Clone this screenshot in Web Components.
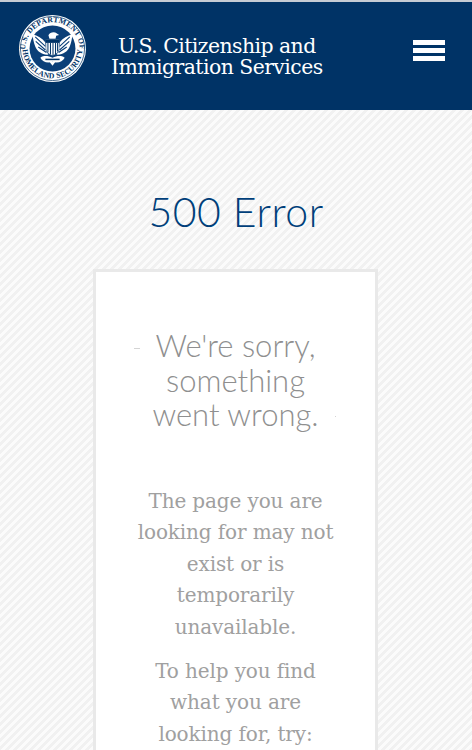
<!DOCTYPE html>
<html lang="en">
<head>
<meta charset="utf-8">
<title>500 Error</title>
<style>
  html, body { margin: 0; padding: 0; }
  body { width: 472px; height: 750px; overflow: hidden; font-family: "DejaVu Serif", serif; }
</style>
</head>
<body>
<uscis-header>
  <span>U.S. Citizenship and</span>
  <span>Immigration Services</span>
</uscis-header>
<error-page heading="500 Error">
  <span slot="lead">We're sorry,<br>something<br>went wrong.</span>
  <p>The page you are looking for may not exist or is temporarily unavailable.</p>
  <p>To help you find what you are looking for, try:</p>
</error-page>

<script>
class DhsSeal extends HTMLElement {
    constructor() {
        super();
        this._shadowRoot = this.attachShadow({mode: "open"})
    }

    connectedCallback() {
        this._shadowRoot.innerHTML = `
            <style>
                :host { display: block; width: 67px; height: 67px; flex: none; }
                svg { display: block; }
                text { font: 700 7.6px "Liberation Serif", serif; fill: #003366; letter-spacing: .2px; }
            </style>
            <svg width="67" height="67" viewBox="0 0 66 66">
                <circle cx="33" cy="33" r="33" fill="#fff"/>
                <circle cx="33" cy="33" r="31.6" fill="none" stroke="#003366" stroke-width=".7"/>
                <circle cx="33" cy="33" r="22.6" fill="#0b3f78"/>
                <defs>
                    <path id="top" d="M6.4 38 A26.9 26.9 0 1 1 59.6 38"/>
                    <path id="bottom" d="M3.6 33 A29.4 29.4 0 0 0 62.4 33"/>
                </defs>
                <text><textPath href="#top" startOffset="50%" text-anchor="middle">U.S. DEPARTMENT OF</textPath></text>
                <text><textPath href="#bottom" startOffset="50%" text-anchor="middle">HOMELAND SECURITY</textPath></text>
                <!-- wings -->
                <path fill="#fff" d="M13.5 19 C18 20.5 23 23 26 27 L27 36 L29 39 C23 39.5 18 36 16 31 C14.5 27 13.5 23 13.5 19 Z"/>
                <path fill="#fff" d="M52.5 19 C48 20.5 43 23 40 27 L39 36 L37 39 C43 39.5 48 36 50 31 C51.5 27 52.5 23 52.5 19 Z"/>
                <path fill="none" stroke="#0b3f78" stroke-width="1.1" d="M16 21.5 L26 31 M16.5 26 L26 34.5 M19 31.5 L27 37 M50 21.5 L40 31 M49.5 26 L40 34.5 M47 31.5 L39 37"/>
                <!-- head -->
                <path fill="#fff" d="M29 20 C30 17 35 16 37 18 L39.5 19.8 L36.6 20.4 L36 23.5 L30 23.5 Z"/>
                <!-- shield -->
                <path fill="#fff" stroke="#003366" stroke-width=".5" d="M26.5 24 H39.5 V33 C39.5 37 36 39 33 40 C30 39 26.5 37 26.5 33 Z"/>
                <path fill="#003366" d="M26.5 24 H39.5 V27.5 H26.5 Z"/>
                <path stroke="#003366" stroke-width="1" d="M28.5 27.5 V37 M31 27.5 V39 M33.5 27.5 V40 M36 27.5 V39 M38 27.5 V36"/>
                <!-- ground, land and sea -->
                <path fill="#fff" d="M21 42 C25 39.5 29 40.5 33 42 C37 40.5 41 39.5 45 42 C43 46 38 48 33 46 C28 48 23 46 21 42 Z"/>
                <path fill="#003366" d="M26 43 H40 V44.5 H26 Z"/>
                <path fill="#fff" d="M30 46 L33 50 L36 46 Z"/>
            </svg>
        `
    }
}

class UscisHeader extends HTMLElement {
    constructor() {
        super();
        this._shadowRoot = this.attachShadow({mode: "open"})
    }

    connectedCallback() {
        this._shadowRoot.innerHTML = `
            <style>
                :host {
                    display: flex;
                    box-sizing: border-box;
                    height: 110px;
                    padding: 13px 27px 0 19px;
                    align-items: flex-start;
                    background: #003366;
                    border-top: 2px solid #c6ccd4;
                }
                .name {
                    display: flex;
                    flex-direction: column;
                    align-items: center;
                    margin: 21px auto 0 25px;
                    color: #fff;
                    font: 20.4px/20.6px "DejaVu Serif", serif;
                    letter-spacing: -.55px;
                }
                .menu {
                    display: flex;
                    flex-direction: column;
                    gap: 3.5px;
                    width: 32px;
                    margin-top: 25px;
                }
                .menu i { display: block; height: 4.5px; background: #fff; }
            </style>
            <dhs-seal></dhs-seal>
            <div class="name"><slot></slot></div>
            <div class="menu"><i></i><i></i><i></i></div>
        `
    }
}

class ErrorPage extends HTMLElement {
    constructor() {
        super();
        this._shadowRoot = this.attachShadow({mode: "open"})
    }

    connectedCallback() {
        this._shadowRoot.innerHTML = `
            <style>
                :host {
                    display: block;
                    height: 640px;
                    overflow: hidden;
                    background: repeating-linear-gradient(135deg, #fbfbfb 0 3px, #f1f1f1 3px 5.66px);
                    text-align: center;
                }
                h1 {
                    margin: 0;
                    padding-top: 77px;
                    color: #003f7a;
                    font: 300 41px/50px Lato, sans-serif;
                    letter-spacing: .5px;
                }
                .card {
                    box-sizing: border-box;
                    position: relative;
                    width: 285px;
                    margin: 32px 0 0 93px;
                    padding: 56px 38px 0;
                    background: #fff;
                    border: 3px solid #e9e9e9;
                }
                .lead {
                    display: block;
                    margin-bottom: 54px;
                    font: 300 31px/34.5px Lato, sans-serif;
                    color: #8f8f8f;
                }
                .fleck { position: absolute; background: #d4d4d4; }
                .dash { left: 38px; top: 76px; width: 6px; height: 1px; }
                .dot { left: 239px; top: 144px; width: 1px; height: 1px; }
                ::slotted(p) {
                    margin: 0 0 12.5px;
                    font: 20px/31.5px "DejaVu Serif", serif;
                    letter-spacing: -.12px;
                    color: #a0a0a0;
                }
            </style>
            <h1>${this.getAttribute("heading")}</h1>
            <div class="card">
                <i class="fleck dash"></i>
                <i class="fleck dot"></i>
                <div class="lead"><slot name="lead"></slot></div>
                <slot></slot>
            </div>
        `
    }
}

window.customElements.define('dhs-seal', DhsSeal)
window.customElements.define('uscis-header', UscisHeader)
window.customElements.define('error-page', ErrorPage)
</script>
</body>
</html>
